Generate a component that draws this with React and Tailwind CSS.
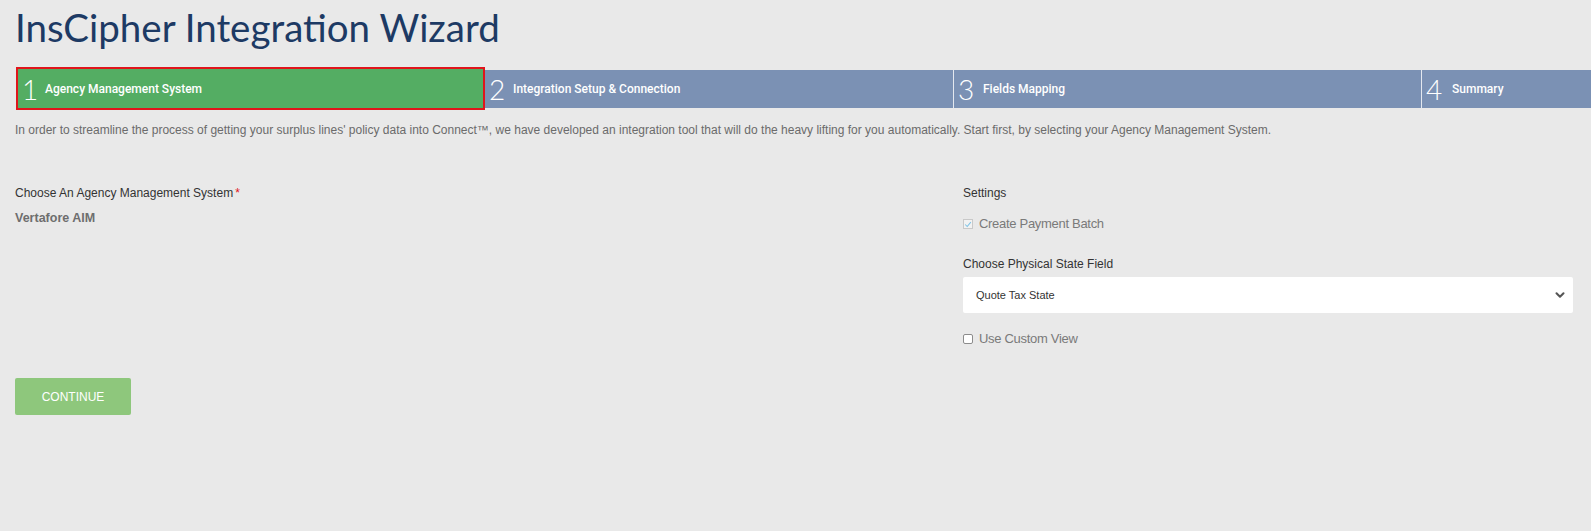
import { ChevronDown } from "lucide-react"

// pad = distance from the step's inner left edge to its label
const steps = [
  { n: "1", label: "Agency Management System", active: true, pad: 27 },
  { n: "2", label: "Integration Setup & Connection", pad: 28 },
  { n: "3", label: "Fields Mapping", pad: 29 },
  { n: "4", label: "Summary", pad: 30 },
]

function StepNum({ n, pad }) {
  return (
    <span
      className="shrink-0 pl-[4px] text-[28px] font-light leading-none text-white font-['Lato',sans-serif]"
      style={{ width: pad }}
    >
      {n}
    </span>
  )
}

function Step({ n, label, active, first, pad }) {
  if (active) {
    return (
      <div className="w-[469px] h-[43px] shrink-0 border-2 border-[#e0151b] bg-[#54ad63] flex items-center">
        <StepNum n={n} pad={pad} />
        <span className="text-[12px] font-medium text-white font-['Roboto',sans-serif]">{label}</span>
      </div>
    )
  }
  return (
    <div
      className={
        "w-[468px] h-[38px] shrink-0 bg-[#7b91b4] flex items-center " +
        (first ? "" : "border-l border-[#e4e8ef]")
      }
    >
      <StepNum n={n} pad={pad} />
      <span className="text-[12px] font-medium text-white font-['Roboto',sans-serif]">{label}</span>
    </div>
  )
}

const App = () => {
  return (
    <div className="min-h-screen w-full overflow-hidden bg-[#e9e9e9] font-['Liberation_Sans',Arial,sans-serif]">
      <h1 className="pt-[4px] pl-[15px] text-[38.5px] leading-[46px] text-[#1d3a64] font-['Lato',sans-serif] whitespace-nowrap">
        InsCipher Integration Wizard
      </h1>

      {/* steps bar */}
      <div className="mt-[17px] ml-[16px] flex items-center w-max">
        {steps.map((s, i) => (
          <Step key={s.n} {...s} first={i === 1} />
        ))}
      </div>

      <p className="mt-[12px] pl-[15px] text-[12px] leading-[16px] text-[#6b6b6b] whitespace-nowrap">
        In order to streamline the process of getting your surplus lines' policy data into Connect™, we have developed an integration tool that will do the heavy lifting for you automatically. Start first, by selecting your Agency Management System.
      </p>

      <div className="flex pl-[15px] pr-[18px]">
        {/* left */}
        <div className="w-[948px] shrink-0">
          <div className="mt-[47px] text-[12px] leading-[16px] text-[#333]">
            Choose An Agency Management System<span className="text-[#e0151b] ml-[2px]">*</span>
          </div>
          <div className="mt-[9px] text-[12.5px] leading-[16px] font-bold text-[#6e6e6e]">Vertafore AIM</div>
        </div>

        {/* right */}
        <div className="flex-1">
          <div className="mt-[47px] text-[12px] leading-[16px] text-[#333]">Settings</div>
          <label className="mt-[14px] h-[18px] flex items-center gap-[6px]">
            <span className="w-[10px] h-[10px] border border-[#c9c9c9] bg-[#f2f2f2] flex items-center justify-center">
              <svg viewBox="0 0 10 10" className="w-[9px] h-[9px]">
                <path d="M1.5 5 L4 7.5 L8.5 2" fill="none" stroke="#7ec3e6" strokeWidth="1.3" />
              </svg>
            </span>
            <span className="text-[13px] leading-[18px] tracking-[-0.3px] text-[#7a7a7a]">Create Payment Batch</span>
          </label>
          <div className="mt-[23px] text-[12px] leading-[16px] text-[#333]">Choose Physical State Field</div>
          <div className="mt-[5px] h-[36px] bg-white rounded-[2px] flex items-center justify-between pl-[13px] pr-[6px]">
            <span className="text-[11px] text-[#333]">Quote Tax State</span>
            <ChevronDown className="w-[14px] h-[14px] text-[#555]" strokeWidth={3.5} />
          </div>
          <label className="mt-[17px] h-[18px] flex items-center gap-[6px]">
            <span className="w-[10px] h-[10px] border border-[#8c8c8c] bg-white rounded-[2px]" />
            <span className="text-[13px] leading-[18px] tracking-[-0.3px] text-[#7a7a7a]">Use Custom View</span>
          </label>
        </div>
      </div>

      <div className="pl-[15px] mt-[30px]">
        <button className="w-[116px] h-[37px] rounded-[2px] bg-[#8ec77c] text-white text-[12px]">
          CONTINUE
        </button>
      </div>
    </div>
  )
}

export default App
